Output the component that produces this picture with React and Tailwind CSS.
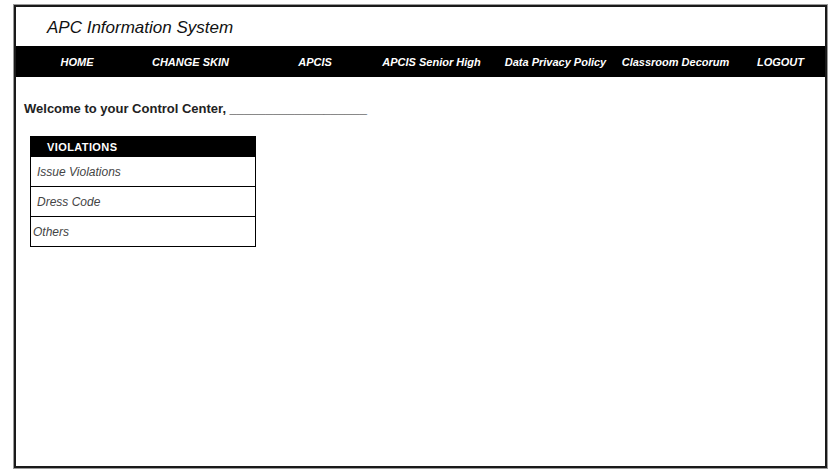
export default function App() {
  const nav = [
    ["HOME", "122px"],
    ["CHANGE SKIN", "105px"],
    ["APCIS", "144px"],
    ["APCIS Senior High", "89px"],
    ["Data Privacy Policy", "159px"],
    ["Classroom Decorum", "81px"],
    ["LOGOUT", "129px"],
  ];
  return (
    <div className="w-[832px] h-[473px] bg-white pl-[14px] pt-[5px]" style={{ fontFamily: '"Liberation Sans", Arial, sans-serif' }}>
      <div className="w-[813px] h-[463px] border-2 border-[#1a1a1a] shadow-[0_0_0_1px_#9a9a9a] flex flex-col">
        <div className="h-[39px] pl-[31px] pt-[11px] text-[17px] italic text-[#111] leading-[19px]">
          APC Information System
        </div>
        <div className="h-[31px] pt-[1px] bg-black grid grid-cols-[122px_105px_144px_89px_159px_81px_129px] overflow-hidden">
          {nav.map(([t]) => (
            <div key={t} className="flex justify-center items-center">
              <span className="whitespace-nowrap text-white text-[11px] font-bold italic">{t}</span>
            </div>
          ))}
        </div>
        <div className="pl-[8px] pt-[24px] text-[13px] font-bold text-[#222] leading-[16px] whitespace-nowrap">
          Welcome to your Control Center, ___________________
        </div>
        <div className="ml-[14px] mt-[19px] w-[226px] border border-black">
          <div className="h-[20px] bg-black text-white text-[11px] font-bold pl-[16px] flex items-center tracking-[0.4px]">
            VIOLATIONS
          </div>
          <div className="h-[30px] border-b border-black flex items-center pl-[6px] text-[12px] italic text-[#444]">Issue Violations</div>
          <div className="h-[30px] border-b border-black flex items-center pl-[6px] text-[12px] italic text-[#444]">Dress Code</div>
          <div className="h-[29px] flex items-center pl-[2px] text-[12px] italic text-[#444]">Others</div>
        </div>
      </div>
    </div>
  );
}
